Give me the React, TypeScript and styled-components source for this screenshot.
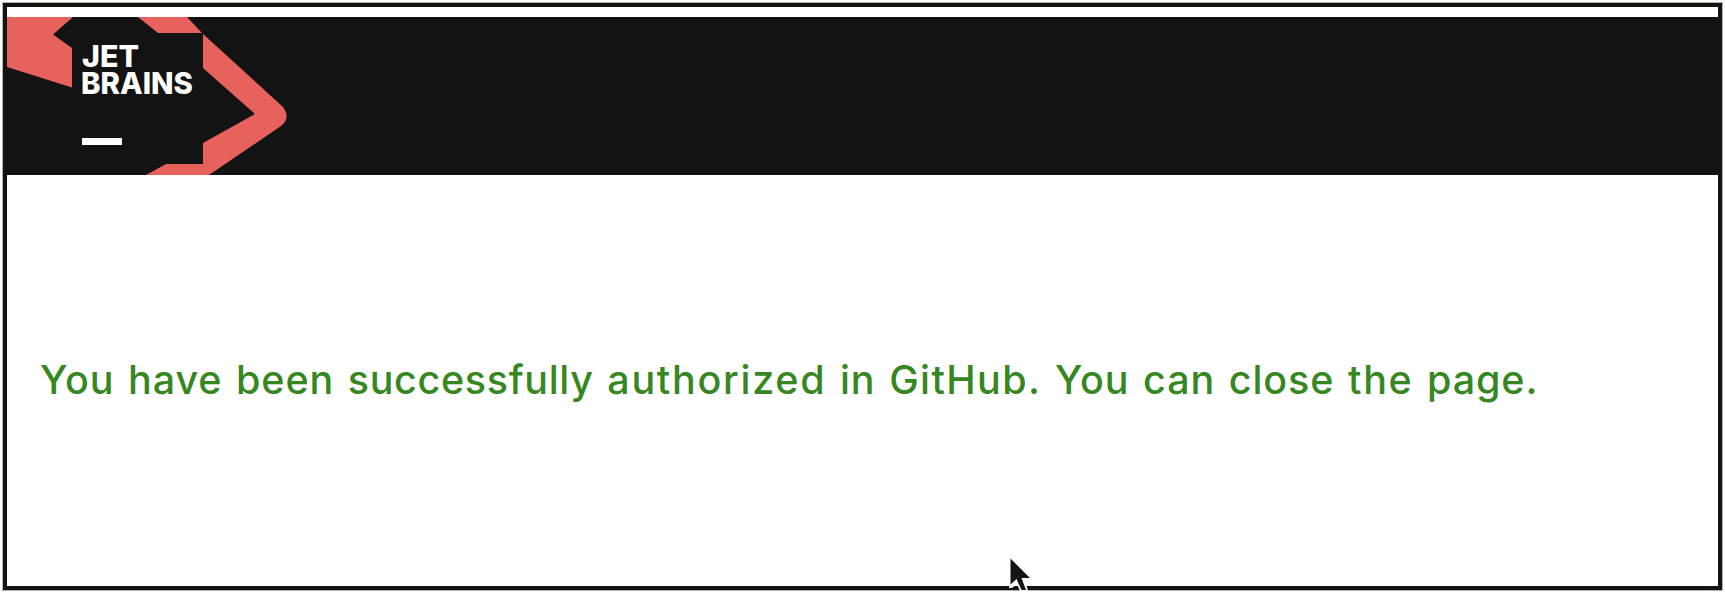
import React from "react";
import styled, { createGlobalStyle } from "styled-components";

const GlobalStyle = createGlobalStyle`
  * { box-sizing: border-box; }
  html, body { margin: 0; background: #ffffff; }
`;

const Page = styled.div`
  position: relative;
  height: 593px;
  padding: 2px;
  overflow: hidden;
`;

const Frame = styled.main`
  display: flex;
  flex-direction: column;
  height: 589px;
  border: 5px solid #131313;
  outline: 1px solid #a9bba3;
  outline-offset: -1px;
  padding-top: 10px;
  background: #ffffff;
`;

const Header = styled.header`
  flex: none;
  height: 158px;
  background: #131313;
`;

const Logo = styled.svg`
  display: block;
  width: 293px;
  height: 158px;
`;

const LogoText = styled.text`
  font-family: Inter, sans-serif;
  font-weight: 800;
  font-size: 30px;
  fill: #ffffff;
`;

const Content = styled.section`
  flex: 1;
  display: flex;
  align-items: center;
  padding: 0 0 2px 33px;
`;

const Message = styled.p`
  margin: 0;
  font-family: Inter, sans-serif;
  font-weight: 500;
  font-size: 39.5px;
  line-height: 48px;
  letter-spacing: 0.9px;
  word-spacing: 2.2px;
  white-space: nowrap;
  color: #36871f;
`;

const Tracked = styled.span<{ $spacing: number }>`
  letter-spacing: ${({ $spacing }) => $spacing}px;
`;

const Cursor = styled.svg`
  position: absolute;
  left: 1006px;
  top: 554px;
  width: 28px;
  height: 37px;
`;

export default function App() {
  return (
    <>
      <GlobalStyle />
      <Page>
        <Frame>
          <Header>
            <Logo viewBox="7 17 293 158" role="img" aria-label="JetBrains">
              <g fill="#e8625d">
                <path d="M7 17H73L53 34.5L72 48V87.5L7 67Z" />
                <path d="M138 17H187L202 33H158Z" />
                <path d="M203 34L283 107Q291 118 281 126L209 175H146L166 164H203V143L255 114L203 68Z" />
              </g>
              <LogoText x="82" y="66.5" textLength="57" lengthAdjust="spacingAndGlyphs">JET</LogoText>
              <LogoText x="81" y="93.5" textLength="112" lengthAdjust="spacingAndGlyphs">BRAINS</LogoText>
              <rect x="82" y="138" width="40" height="7" fill="#ffffff" />
            </Logo>
          </Header>
          <Content>
            <Message>
              You have been <Tracked $spacing={0.65}>successfully</Tracked>{" "}
              <Tracked $spacing={1.7}>authorized</Tracked> in{" "}
              <Tracked $spacing={1.4}>GitHub.</Tracked> You can close{" "}
              <Tracked $spacing={1.6}>the</Tracked> page.
            </Message>
          </Content>
        </Frame>
        <Cursor viewBox="1006 554 28 37" aria-hidden="true">
          <path d="M1009 556V588H1012L1017 584L1020 591H1028L1025 579H1033Z" fill="#ffffff" />
          <path d="M1010.5 558.5V584.5L1016.5 579L1021.5 590H1026L1021.5 578H1030Z" fill="#131313" />
        </Cursor>
      </Page>
    </>
  );
}
